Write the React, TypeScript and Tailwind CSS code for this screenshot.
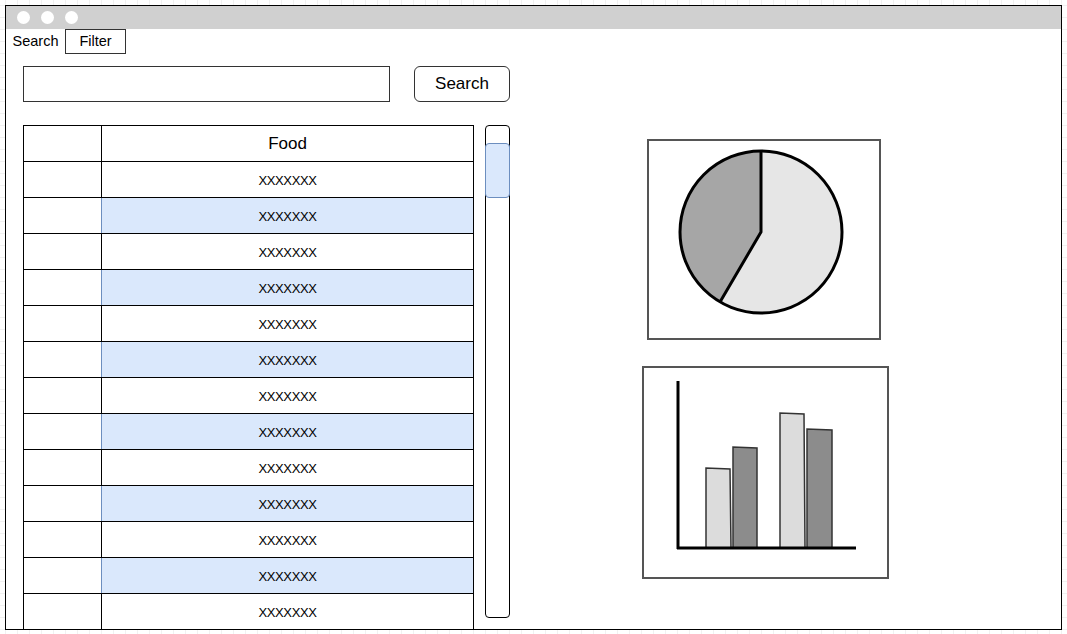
import React from "react";

const rows = Array.from({ length: 13 }, (_, i) => i);

function PieChart() {
  return (
    <div className="w-[234px] h-[201px] border-2 border-[#555] bg-white ml-[5px]">
      <svg width="230" height="197" viewBox="0 0 230 197">
        <circle cx="112" cy="91" r="81" fill="#e6e6e6" />
        <path d="M112,91 L112,10 A81,81 0 0,0 71,161 Z" fill="#a6a6a6" />
        <circle cx="112" cy="91" r="81" fill="none" stroke="#000" strokeWidth="3" />
        <polyline points="112,10 112,91 71,161" fill="none" stroke="#000" strokeWidth="3" strokeLinejoin="round" />
      </svg>
    </div>
  );
}

function BarChart() {
  return (
    <div className="w-[247px] h-[213px] border-2 border-[#555] bg-white mt-[26px]">
      <svg width="243" height="209" viewBox="0 0 243 209">
        <polygon points="62,180 62,100 86,101 87,180" fill="#dcdcdc" stroke="#333" strokeWidth="1.5" />
        <polygon points="89,180 89,79 113,80 113,180" fill="#8c8c8c" stroke="#333" strokeWidth="1.5" />
        <polygon points="136,180 136,45 160,46 161,180" fill="#dcdcdc" stroke="#333" strokeWidth="1.5" />
        <polygon points="163,180 163,61 188,62 188,180" fill="#8c8c8c" stroke="#333" strokeWidth="1.5" />
        <line x1="34" y1="13" x2="34" y2="181" stroke="#000" strokeWidth="3" />
        <line x1="33" y1="180" x2="212" y2="180" stroke="#000" strokeWidth="3" />
      </svg>
    </div>
  );
}

export default function App() {
  return (
    <div
      className="w-[1067px] h-[634px] pt-[5px] pl-[5px] overflow-hidden bg-white bg-[linear-gradient(#f1f1f1_1px,transparent_1px),linear-gradient(90deg,#f1f1f1_1px,transparent_1px)] bg-size-[12px_12px] bg-position-[5px_5px]"
      style={{ fontFamily: '"Liberation Sans", Arial, sans-serif' }}
    >
      <div className="w-[1057px] h-[625px] border border-black bg-white flex flex-col overflow-hidden">
        {/* title bar */}
        <div className="h-[23px] bg-[#d0d0d0] flex items-center gap-[11px] pl-[11px] shrink-0">
          <span className="w-[13px] h-[13px] rounded-full bg-white" />
          <span className="w-[13px] h-[13px] rounded-full bg-white" />
          <span className="w-[13px] h-[13px] rounded-full bg-white" />
        </div>

        {/* tabs */}
        <div className="h-[25px] flex text-[14.5px] text-black shrink-0">
          <div className="w-[59px] flex items-center justify-center">Search</div>
          <div className="w-[61px] border border-[#333] flex items-center justify-center">Filter</div>
        </div>

        <div className="flex pl-[17px] pt-[12px]">
          {/* left column */}
          <div className="w-[487px] flex flex-col">
            <div className="flex items-center h-[36px]">
              <div className="w-[367px] h-[36px] border border-[#333]" />
              <button className="ml-[24px] w-[96px] h-[36px] border border-[#333] rounded-[6px] text-[17px] text-black bg-white">
                Search
              </button>
            </div>

            <div className="flex mt-[23px]">
              <div className="w-[451px] border border-black">
                <div className="flex h-[35px]">
                  <div className="w-[78px] border-r border-black" />
                  <div className="flex-1 flex items-center justify-center text-[17px] text-black">Food</div>
                </div>
                {rows.map((i) => (
                  <div key={i} className="flex h-[36px] border-t border-black">
                    <div className="w-[78px] border-r border-black" />
                    <div
                      className={
                        i % 2 === 1
                          ? "flex-1 flex items-center justify-center pt-[2px] text-[13px] tracking-[-0.4px] text-black bg-[#dae8fc] border-l border-[#6c8ebf] -ml-px"
                          : "flex-1 flex items-center justify-center pt-[2px] text-[13px] tracking-[-0.4px] text-black"
                      }
                    >
                      XXXXXXX
                    </div>
                  </div>
                ))}
              </div>

              {/* scrollbar */}
              <div className="ml-[11px] w-[25px] h-[493px] border border-black rounded-[4px] pt-[17px]">
                <div className="h-[55px] -mx-px bg-[#dae8fc] border border-[#6c8ebf] rounded-[4px]" />
              </div>
            </div>
          </div>

          {/* charts */}
          <div className="ml-[132px] pt-[73px] flex flex-col">
            <PieChart />
            <BarChart />
          </div>
        </div>
      </div>
    </div>
  );
}
